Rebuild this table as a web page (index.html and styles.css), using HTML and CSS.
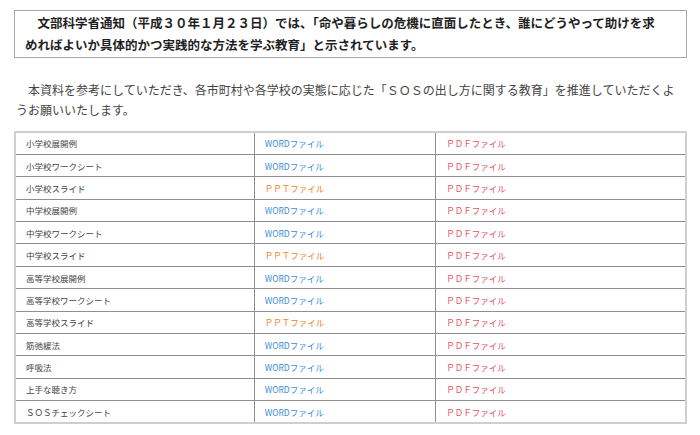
FILE: index.html
```html
<!DOCTYPE html>
<html lang="ja">
<head>
<meta charset="utf-8">
<title>SOSの出し方に関する教育</title>
<link rel="stylesheet" href="styles.css">
</head>
<body>
<div class="page">
  <div class="notice">文部科学省通知（平成３０年１月２３日）では、「命や暮らしの危機に直面したとき、誰にどうやって助けを求めればよいか具体的かつ実践的な方法を学ぶ教育」と示されています。</div>
  <p class="intro">本資料を参考にしていただき、各市町村や各学校の実態に応じた「ＳＯＳの出し方に関する教育」を推進していただくようお願いいたします。</p>
  <table class="files">
    <colgroup><col class="c1"><col class="c2"><col class="c3"></colgroup>
    <tbody>
      <tr><td>小学校展開例</td><td><a class="word">WORDファイル</a></td><td><a class="pdf">ＰＤＦファイル</a></td></tr>
      <tr><td>小学校ワークシート</td><td><a class="word">WORDファイル</a></td><td><a class="pdf">ＰＤＦファイル</a></td></tr>
      <tr><td>小学校スライド</td><td><a class="ppt">ＰＰＴファイル</a></td><td><a class="pdf">ＰＤＦファイル</a></td></tr>
      <tr><td>中学校展開例</td><td><a class="word">WORDファイル</a></td><td><a class="pdf">ＰＤＦファイル</a></td></tr>
      <tr><td>中学校ワークシート</td><td><a class="word">WORDファイル</a></td><td><a class="pdf">ＰＤＦファイル</a></td></tr>
      <tr><td>中学校スライド</td><td><a class="ppt">ＰＰＴファイル</a></td><td><a class="pdf">ＰＤＦファイル</a></td></tr>
      <tr><td>高等学校展開例</td><td><a class="word">WORDファイル</a></td><td><a class="pdf">ＰＤＦファイル</a></td></tr>
      <tr><td>高等学校ワークシート</td><td><a class="word">WORDファイル</a></td><td><a class="pdf">ＰＤＦファイル</a></td></tr>
      <tr><td>高等学校スライド</td><td><a class="ppt">ＰＰＴファイル</a></td><td><a class="pdf">ＰＤＦファイル</a></td></tr>
      <tr><td>筋弛緩法</td><td><a class="word">WORDファイル</a></td><td><a class="pdf">ＰＤＦファイル</a></td></tr>
      <tr><td>呼吸法</td><td><a class="word">WORDファイル</a></td><td><a class="pdf">ＰＤＦファイル</a></td></tr>
      <tr><td>上手な聴き方</td><td><a class="word">WORDファイル</a></td><td><a class="pdf">ＰＤＦファイル</a></td></tr>
      <tr><td>ＳＯＳチェックシート</td><td><a class="word">WORDファイル</a></td><td><a class="pdf">ＰＤＦファイル</a></td></tr>
    </tbody>
  </table>
</div>
</body>
</html>
```

FILE: styles.css
```css
html, body {
  margin: 0;
  padding: 0;
  background: #ffffff;
}

body {
  font-family: "Noto Sans CJK JP", "Noto Sans", sans-serif;
  color: #333333;
}

.page {
  padding: 10px 13px 0 14px;
}

.notice {
  border: 1px solid #a8a8a8;
  padding: 1px 22px 1px 10px;
  font-size: 12.5px;
  line-height: 22px;
  font-weight: bold;
  color: #1f1f1f;
  text-indent: 1em;
}

.intro {
  margin: 22px 12px 11px 2px;
  font-size: 12px;
  line-height: 20px;
  color: #444444;
  text-indent: 1em;
}

.files {
  width: 673px;
  border-collapse: collapse;
  border: 2px solid #cfcfcf;
  font-size: 8.5px;
}

.c1 { width: 240px; }
.c2 { width: 182px; }
.c3 { width: 251px; }

.files td {
  border: 1px solid #8f8f8f;
  height: 22.4px;
  padding: 0 0 0 10px;
  box-sizing: border-box;
  vertical-align: middle;
  color: #444444;
  line-height: 12px;
}

.files a {
  text-decoration: none;
}

.word { color: #3c8ddc; }
.ppt { color: #f2832f; }
.pdf { color: #e0545f; }
```
